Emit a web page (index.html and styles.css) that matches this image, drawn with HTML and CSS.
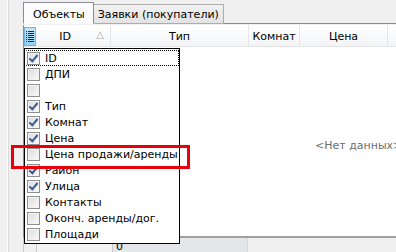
FILE: index.html
```html
<!DOCTYPE html>
<html lang="ru">
<head>
    <meta charset="UTF-8">
    <title>Объекты</title>
    <link rel="stylesheet" href="styles.css">
</head>
<body>

    <div class="window">
        <div class="splitter"></div>

        <div class="main">
            <div class="tabs">
                <div class="tab active">Объекты</div>
                <div class="tab">Заявки (покупатели)</div>
            </div>

            <div class="grid">
                <div class="grid-head">
                    <div class="chooser">
                        <svg width="8" height="11" viewBox="0 0 8 11">
                            <rect x="0" y="0" width="1" height="1" fill="#1b2a4a"/>
                            <rect x="2" y="0" width="6" height="1" fill="#1b2a4a"/>
                            <rect x="0" y="2" width="1" height="1" fill="#1b2a4a"/>
                            <rect x="2" y="2" width="6" height="1" fill="#1b2a4a"/>
                            <rect x="0" y="4" width="1" height="1" fill="#1b2a4a"/>
                            <rect x="2" y="4" width="6" height="1" fill="#1b2a4a"/>
                            <rect x="0" y="6" width="1" height="1" fill="#1b2a4a"/>
                            <rect x="2" y="6" width="6" height="1" fill="#1b2a4a"/>
                            <rect x="0" y="8" width="1" height="1" fill="#1b2a4a"/>
                            <rect x="2" y="8" width="6" height="1" fill="#1b2a4a"/>
                            <rect x="0" y="10" width="1" height="1" fill="#1b2a4a"/>
                            <rect x="2" y="10" width="6" height="1" fill="#1b2a4a"/>
                        </svg>
                    </div>
                    <div class="col col-id">ID<span class="sort">&#9651;</span></div>
                    <div class="col col-type">Тип</div>
                    <div class="col col-rooms">Комнат</div>
                    <div class="col col-price">Цена</div>
                    <div class="col col-rest"></div>
                </div>

                <div class="grid-body">
                    <span class="empty">&lt;Нет данных&gt;</span>
                </div>

                <div class="grid-foot">
                    <div class="foot-ind"></div>
                    <div class="foot-cell foot-id"></div>
                    <div class="foot-cell foot-sum">0</div>
                    <div class="foot-cell foot-rest"></div>
                </div>
            </div>
        </div>
    </div>

    <div class="col-menu">
        <div class="menu-item focused"><span class="check on"></span>ID</div>
        <div class="menu-item"><span class="check"></span>ДПИ</div>
        <div class="menu-item"><span class="check"></span></div>
        <div class="menu-item"><span class="check on"></span>Тип</div>
        <div class="menu-item"><span class="check on"></span>Комнат</div>
        <div class="menu-item"><span class="check on"></span>Цена</div>
        <div class="menu-item"><span class="check"></span>Цена продажи/аренды</div>
        <div class="menu-item"><span class="check on"></span>Район</div>
        <div class="menu-item"><span class="check on"></span>Улица</div>
        <div class="menu-item"><span class="check"></span>Контакты</div>
        <div class="menu-item"><span class="check"></span>Оконч. аренды/дог.</div>
        <div class="menu-item"><span class="check"></span>Площади</div>
    </div>

    <div class="highlight"></div>

</body>
</html>
```

FILE: styles.css
```css
body {
    margin: 0;
    padding: 0;
    background-color: #f0f0f0;
    font-family: "DejaVu Sans", Tahoma, sans-serif;
    font-size: 11px;
    color: #000;
    overflow: hidden;
}

.window {
    display: flex;
    height: 252px;
}

.splitter {
    width: 15px;
    flex: none;
    margin-left: 7px;
    border-left: 1px solid #fdfdfd;
    box-shadow: inset 1px 0 0 #dadada;
}

.main {
    flex: 1;
    display: flex;
    flex-direction: column;
    min-width: 0;
}

/* onglets */
.tabs {
    display: flex;
    align-items: flex-end;
    height: 23px;
    border-bottom: 1px solid #898c95;
}

.tab {
    box-sizing: border-box;
    height: 20px;
    padding: 2px 4px 0 4px;
    margin-bottom: -1px;
    border: 1px solid #acacac;
    border-left: 0;
    background: linear-gradient(#f2f2f2, #e3e3e3);
    line-height: 16px;
    white-space: nowrap;
}

.tab.active {
    height: 22px;
    padding: 4px 8px 0 9px;
    border: 1px solid #898c95;
    border-bottom: 1px solid #fcfcfc;
    background: #fcfcfc;
    position: relative;
    z-index: 1;
}

/* grille */
.grid {
    flex: 1;
    display: flex;
    flex-direction: column;
    background: #fff;
    border-left: 1px solid #8e8f8f;
    margin-top: 1px;
    min-height: 0;
}

.grid-head {
    display: flex;
    height: 21px;
    flex: none;
    background: linear-gradient(#ffffff, #f3f4f6);
    border-bottom: 1px solid #e5e5e5;
}

.chooser {
    width: 12px;
    flex: none;
    margin-top: 2px;
    box-sizing: border-box;
    display: flex;
    align-items: center;
    justify-content: center;
    background: linear-gradient(#c6e6f8, #8fd0f1);
    border: 1px solid #6fb7e0;
}

.col {
    flex: none;
    box-sizing: border-box;
    border-right: 1px solid #e3e6eb;
    display: flex;
    align-items: center;
    justify-content: center;
    position: relative;
    white-space: nowrap;
    padding-top: 2px;
}

.col-id { width: 75px; padding-right: 16px; }
.col-type { width: 138px; }
.col-rooms { width: 51px; }
.col-price { width: 88px; }
.col-rest { flex: 1; border-right: 0; }

.sort {
    position: absolute;
    right: 6px;
    top: 4px;
    font-size: 10px;
    color: #a8a8a8;
}

.grid-body {
    flex: 1;
    display: flex;
    align-items: center;
    padding-left: 291px;
    padding-top: 8px;
}

.empty {
    color: #6d6d6d;
    white-space: nowrap;
}

.grid-foot {
    flex: none;
    display: flex;
    height: 14px;
    border-top: 2px solid #a0a0a0;
    background: #f0f0f0;
    margin-left: -1px;
}

.foot-ind {
    width: 12px;
    border-left: 1px solid #c8c8c8;
}

.foot-cell {
    box-sizing: border-box;
    border-left: 1px solid #c8c8c8;
    padding: 2px 0 0 3px;
    line-height: 14px;
}

.foot-id { width: 76px; background: #f2f2f2; }
.foot-sum { width: 135px; background: #e4e6ea; }
.foot-rest { flex: 1; border-left: 1px solid #d8d8d8; }

/* menu des colonnes */
.col-menu {
    position: absolute;
    left: 24px;
    top: 48px;
    width: 154px;
    height: 193px;
    border: 1px solid #000;
    background: #fff;
    padding-top: 1px;
}

.menu-item {
    display: flex;
    align-items: center;
    height: 16px;
    white-space: nowrap;
    box-sizing: border-box;
    border: 1px solid transparent;
    margin-left: 1px;
}

.menu-item.focused {
    border: 1px dotted #000;
    border-left-color: transparent;
}

.check {
    box-sizing: border-box;
    width: 13px;
    height: 13px;
    flex: none;
    margin-right: 5px;
    border: 1px solid #8e8f8f;
    background: linear-gradient(135deg, #dcdcdc, #f9f9f9);
    box-shadow: inset 0 0 0 1px #f4f4f4;
    position: relative;
}

.check.on::after {
    content: "";
    position: absolute;
    left: 3px;
    top: 0px;
    width: 3px;
    height: 7px;
    border: solid #3d5a98;
    border-width: 0 2px 2px 0;
    transform: rotate(40deg);
}

.highlight {
    position: absolute;
    left: 11px;
    top: 145px;
    width: 173px;
    height: 18px;
    border: 3px solid #e8000b;
}
```
